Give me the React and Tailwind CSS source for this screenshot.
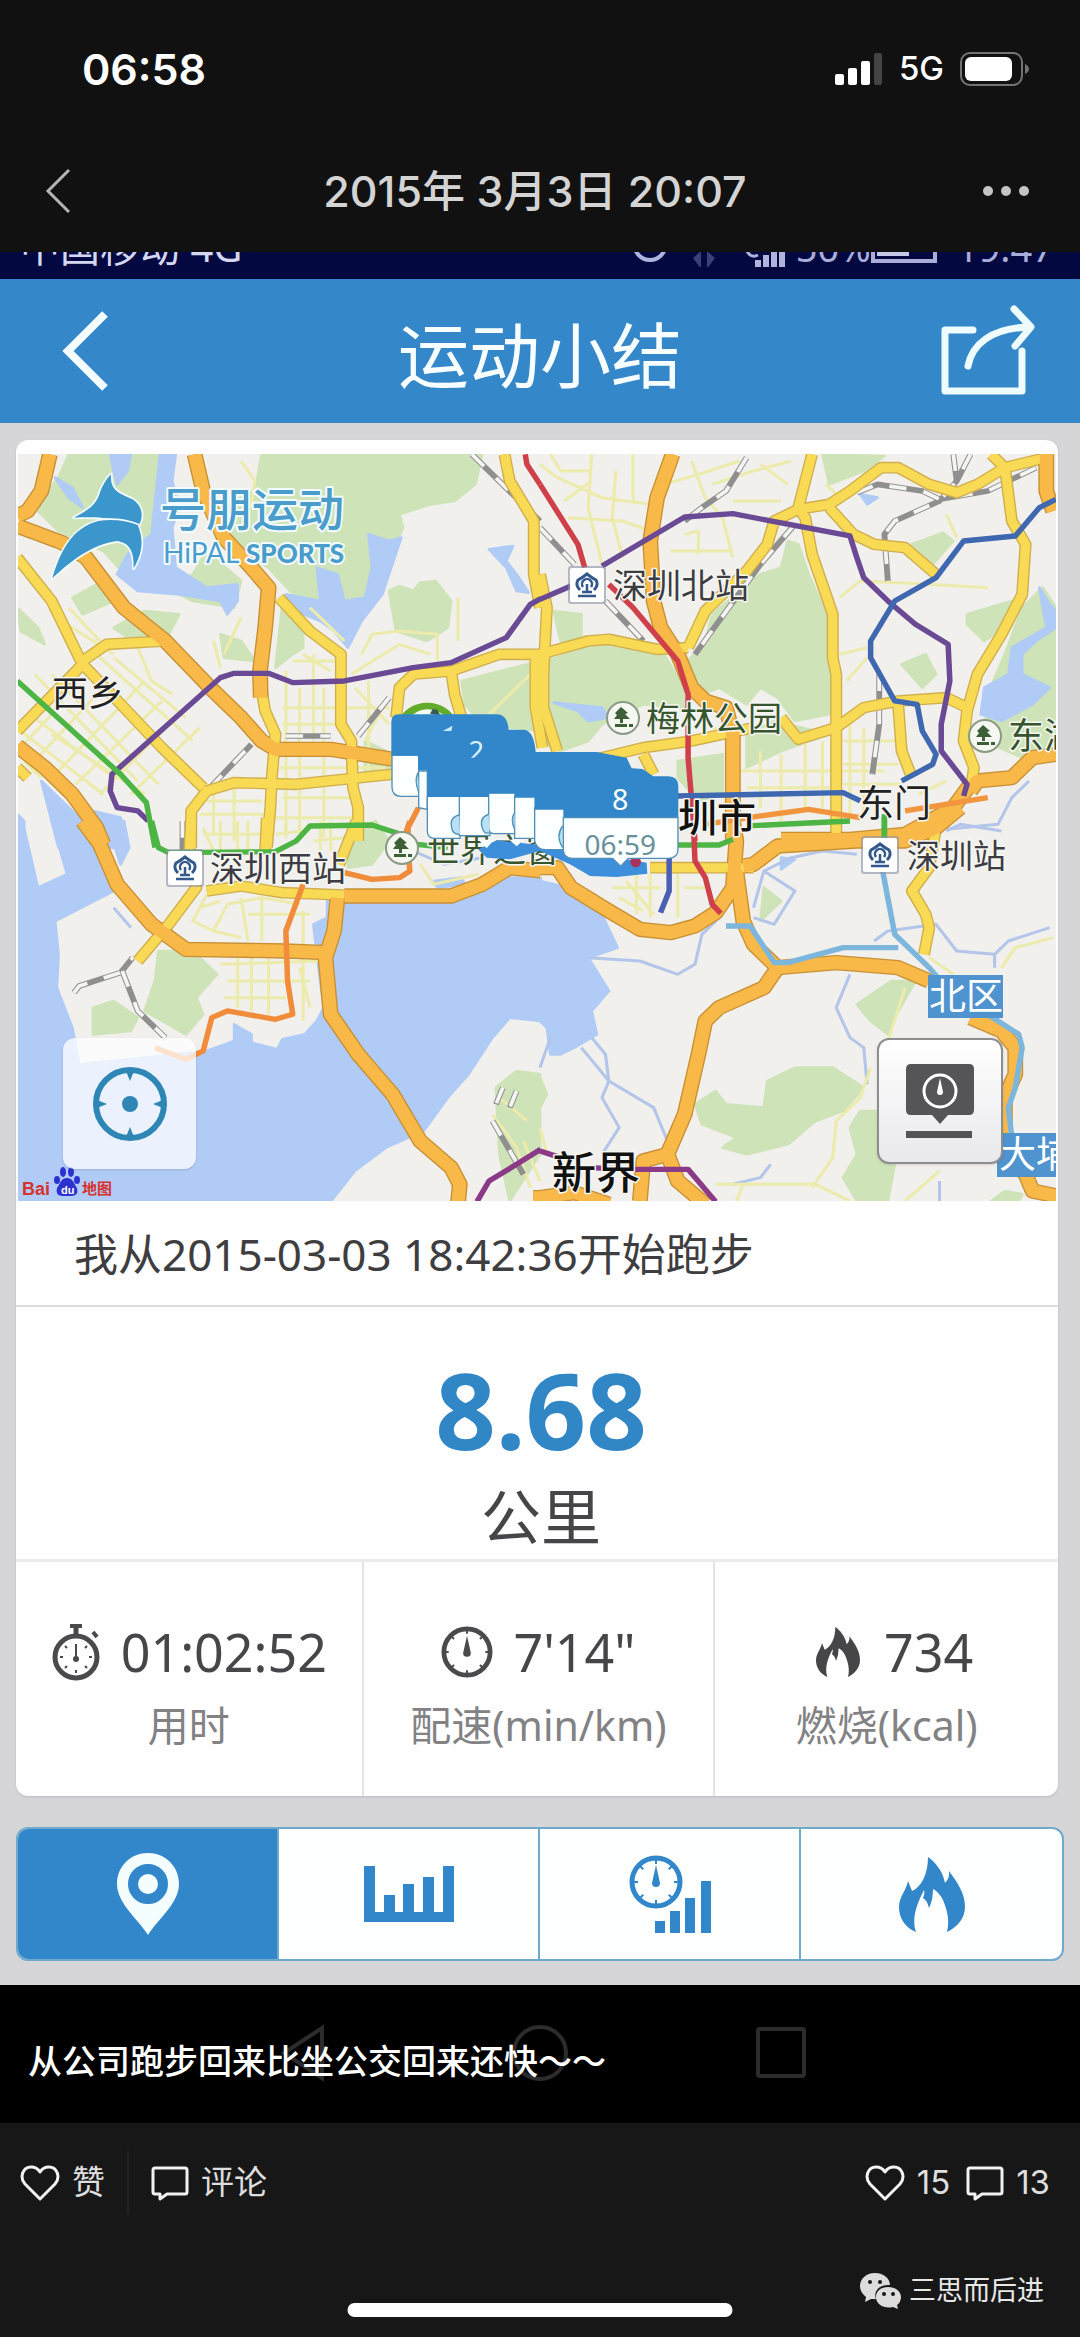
import React from "react";

/* The map is digitised in four sheets; each sheet has its own local grid. */
const SHEETS = {
  nw: "translate(0 440) scale(.3444 .3333)",
  ne: "translate(540 440) scale(.3444 .3333)",
  sw: "translate(0 820) scale(.3444 .3333)",
  se: "translate(540 820) scale(.3444 .3333)",
};

const GREEN = [
  ["nw", "M200 40L460 40 470 200 440 330 380 420 300 330 170 270 100 200 170 110Z"],
  ["nw", "M760 40L1400 40 1380 130 1320 180 1250 190 1160 220 1170 260 1140 330 1090 430 1040 540 980 560 940 470 860 470 780 380 700 330 640 200 740 150Z"],
  ["nw", "M1130 450L1160 435 1200 450 1220 425 1265 420 1310 480 1300 560 1240 600 1150 570Z"],
  ["nw", "M330 560L420 510 520 520 480 600 400 610Z"],
  ["nw", "M600 330L700 420 680 500 560 480 480 440 560 400Z"],
  ["nw", "M210 470L300 420 330 480 240 520Z"],
  ["nw", "M820 490L880 560 880 620 850 640 800 680Z"],
  ["nw", "M50 500L110 560 130 610 60 570Z"],
  ["nw", "M640 580L700 600 740 660 650 650Z"],
  ["nw", "M1340 720L1568 660 1568 870 1400 850 1350 790Z"],
  ["nw", "M1060 900L1140 940 1140 1000 1060 1000Z"],
  ["ne", "M0 665L170 610 360 640 430 760 420 800 300 790 180 850 140 900 60 930 0 900Z"],
  ["ne", "M500 520L640 400 700 380 720 300 750 310 780 400 840 540 840 820 740 840 690 770 640 740 600 790 520 740 470 760 430 660 480 600Z"],
  ["ne", "M820 40L1000 45 940 90 840 130Z"],
  ["ne", "M1080 310L1170 275 1200 300 1140 370Z"],
  ["ne", "M1240 520L1370 480 1350 560 1290 600 1240 550Z"],
  ["ne", "M1460 440L1498 500V900L1400 950 1290 900 1300 760 1350 640 1400 500Z"],
  ["ne", "M1050 670L1120 640 1150 700 1110 740Z"],
  ["ne", "M600 880L680 840 840 880 700 930 600 980Z"],
  ["ne", "M40 510L120 520 120 590 60 600Z"],
  ["ne", "M400 960L530 940 530 1060 460 1080 400 1010Z"],
  ["sw", "M460 390L560 390 630 460 570 530 590 580 540 640 420 570 450 480Z"],
  ["sw", "M270 560L330 540 400 590 380 630 270 640Z"],
  ["sw", "M1010 40L1090 0 1130 60 1080 130 1010 140Z"],
  ["sw", "M1440 800L1500 750 1568 760V1000L1480 1140 1450 1000Z"],
  ["se", "M450 850L510 810 540 850 650 860 660 780 740 740 850 740 940 800 880 870 800 900 720 970 600 1000 530 980 570 950 470 910Z"],
  ["se", "M920 550L1020 480 1090 480 1040 570 1010 640 960 600Z"],
  ["se", "M930 870H1000L1030 1030 1010 1140H920L880 1070 920 1000 900 920Z"],
  ["se", "M650 200L700 240 640 300Z"],
  ["se", "M0 770L20 820 0 860Z"],
  ["se", "M1310 1140L1350 1110 1400 1120 1390 1140Z"],
];

const WATER = [
  ["nw", "M320 40H380L370 90 340 130 330 90Z"],
  ["nw", "M465 40H510L500 120 520 200 500 260 510 380 600 440 690 430 690 480 660 520 640 480 520 460 400 450 340 400 370 340 440 280 450 180Z"],
  ["nw", "M160 110L210 140 240 200 200 170Z"],
  ["nw", "M830 460L930 480 920 380 980 400 1000 480 1060 470 1080 380 1070 280 1130 300 1165 290 1110 460 1050 540 1010 620 970 570 930 540 860 510Z"],
  ["nw", "M1420 325L1490 315 1470 360 1500 400 1535 455 1500 450 1470 380Z"],
  ["nw", "M120 1020L170 1070 240 1140 270 1220H170Z"],
  ["nw", "M50 1120L70 1140 70 1220H50Z"],
  ["nw", "M270 1110L350 1130 370 1220H310Z"],
  ["ne", "M1450 440L1480 490 1498 510V560L1440 600 1400 640 1400 700 1480 740 1430 790 1340 840 1280 820 1290 740 1360 700 1370 620 1470 560Z"],
  ["ne", "M40 785L180 800 200 830 140 840 110 810Z"],
  ["ne", "M930 160L980 170 950 190Z"],
  ["sw", "M50 0H65L110 200 195 160 150 0H240L330 210 160 300 170 400 165 500 210 620 230 730 600 690 680 660V610L730 640V665L805 685 820 655 885 640 920 600 940 560 920 400 910 310 950 290V240H1300L1450 170H1570V600L1480 590 1430 650 1360 760 1300 830 1230 930 1120 980 1030 1050 960 1142H50Z"],
  ["sw", "M310 0H360L375 80 350 130Z"],
  ["sw", "M1260 180L1340 170 1350 190 1270 200Z"],
  ["se", "M0 180L80 200 170 260 225 380 140 410 200 510 150 570 165 640 100 680 60 700 30 700 20 620 0 600Z"],
  ["se", "M700 110L740 115 700 145Z"],
];

const STREETS = [
  ["nw", "M100 700L400 1020M150 700L460 1030M60 870L300 1060M100 830L330 1010M150 880L420 1060M280 640L560 900M330 650L540 830M60 920L150 820M100 960L300 740M160 1000L420 720M220 1030L470 780M290 1060L520 820M380 1060L580 860M180 540L330 640M200 500L290 600M70 960L120 1010M400 620L440 720 500 760M620 600L640 680M700 530L650 640"],
  ["nw", "M830 690V1180M870 740V1180M910 640V900M940 740V1190M1070 720V1000M820 800H1130M820 850H1000M810 980H1120M820 1070H1020M800 1130H1030M880 640L960 690M850 660H990M1030 740L1130 850M1060 900L1120 780M600 1080H760M620 1180V1050M680 1040V1200M580 1120H780"],
  ["nw", "M1050 640L1080 580 1160 570 1270 580 1270 660M1020 700L1160 610 1250 640M700 60L740 120 730 200M1380 860L1540 700M1330 470V600M900 500L1000 600"],
  ["ne", "M30 40L60 90 150 90M0 70L50 110 180 170 320 190M150 40L140 200 180 370M220 90L210 230 240 350M70 180L150 120M270 40V180M80 230L240 240 320 270M360 130L460 100 580 60M440 60L480 170 530 230 560 350M380 330H560M420 280L460 270 460 340M560 180H700M500 130L620 90 730 60M640 70L720 130M860 160L830 130"],
  ["ne", "M580 990H1000M600 1040H840M640 930V1100M700 940V1140M770 900V1100M820 900V1100M900 850V1120M940 860V1120M880 900H1030M880 970H1040M880 1030H1050M460 830L560 900M870 470L930 420 1130 430 1300 440M870 640L950 620M890 720L950 650M1180 220L1210 290M1100 1060L1180 1020"],
  ["sw", "M590 20L620 90M640 0V90M690 0V90M720 0V90M830 0V50M590 40H760M800 40L880 30M600 220L560 300 620 330 660 250 760 230 870 250M700 230L720 360M760 230V360M620 330L700 350M640 430L930 420M660 480H900M650 530H830M690 400V560M730 400V570M780 400V580M880 270V600M870 440L900 560M720 280H900M580 260L640 240M910 60L1000 50M930 0V90M960 0V90M1220 130L1260 190 1390 160M1430 880L1500 980 1540 1100M1450 830L1530 900M1520 960L1568 1080"],
  ["se", "M210 200H350M230 230L300 270M280 150V280M320 160V290M400 150V290M420 200H480M250 180L330 280M510 1090H640L800 1090 900 1140M790 1100L850 1010 860 900 930 830 960 740M570 1140L590 1090M1060 500L1010 660M1340 440L1380 380 1490 350M1130 410L1200 460M1060 1140L1160 1050M0 920L20 1000M680 110L740 60"],
];

const RAILS = [
  ["nw", "M1370 40L1568 240"],
  ["nw", "M610 1040L730 910M830 885H960M1040 885L1130 770"],
  ["ne", "M600 50L540 150 470 200 420 240M740 250L640 370 520 540 450 640"],
  ["ne", "M1200 40L1210 120M1250 40L1210 120 1160 180 1030 240 1000 280 1010 420M920 155L980 130 1110 150 1160 175 1300 150 1440 80"],
  ["ne", "M985 700V850L965 1000"],
  ["ne", "M0 260L100 370M190 480L300 600"],
  ["sw", "M215 515L230 495 350 455 385 410M355 450L400 570 480 650"],
  ["sw", "M530 0V90M1460 800L1440 850M1500 810L1480 860M1430 900L1520 1060"],
];

const RIVERS = [
  ["se", "M140 410L290 420 400 460 450 430 470 340 520 290M150 650L190 700 200 780 330 860 370 960M120 680L200 780 180 830 230 920 180 1000M900 460L860 560 900 650 940 680 950 790M620 260L650 150 740 210 680 310 620 290M650 150L730 110 820 90 920 100M970 360L1010 330 1150 310 1210 390 1320 400 1360 360 1480 320M1320 400V440M0 740L30 650M560 1090L640 1070 670 1030M1180 30L1220 10 1340 30M1160 1140V1080"],
  ["ne", "M1180 1165L1330 1150 1370 1070 1420 1020"],
  ["sw", "M330 260L380 320M1200 90L1290 130 1400 110"],
];

const YELLOW = [
  ["nw", "M755 720L770 810 800 880 790 1000 785 1100 775 1220"],
  ["nw", "M50 350L150 480 230 650 240 670 50 870"],
  ["nw", "M240 660L310 610 480 600M240 670L360 800 470 920 590 1040"],
  ["nw", "M1140 1000L1000 1015 860 1030 680 1025 600 1050 555 1110V1220"],
  ["nw", "M810 470L900 570 990 640V850L1020 900 1025 1040 1040 1100V1200"],
  ["nw", "M1150 830L1160 740 1200 700 1310 690 1450 640 1570 640M1310 690L1320 760 1340 830"],
  ["nw", "M1465 40L1480 120 1550 240V400L1568 500M1555 640V800L1575 920"],
  ["nw", "M50 980L80 1010"],
  ["ne", "M790 40L750 200 770 230 790 340 850 520V650L860 700V1200"],
  ["ne", "M430 620L480 510 600 390 660 310 680 240 750 205 840 190 900 150 990 80H1040L1130 130 1210 155 1270 130 1350 80 1470 50"],
  ["ne", "M1310 40L1350 80 1370 240 1410 310 1400 460 1340 580 1270 700 1240 810 1230 900 1260 980 1250 1050"],
  ["ne", "M840 200L910 280 970 310 1060 320 1150 400"],
  ["ne", "M0 640L140 600 200 595 340 625 430 620"],
  ["ne", "M700 830L750 895 860 860 940 800 1040 780 1180 770 1240 800M1040 790L1050 930 1080 1010"],
  ["ne", "M0 400L20 500 10 700V800L50 930M160 955L300 920 440 900 620 860M300 940L330 1000"],
  ["sw", "M555 -10L550 90 570 200 490 310 400 420M600 210L700 195 820 215 1000 222M1035 0L985 130"],
  ["sw", "M775 -10L770 90"],
  ["se", "M320 140H620M1150 20L1130 140 1080 210 1120 280 1130 320 1115 400"],
];

const ORANGE = [
  ["nw", "M145 40L120 150 80 210 50 225M50 255L180 305 250 350 360 500 480 600 620 750 700 830 760 900 800 925 960 925 1140 955"],
  ["nw", "M565 40L590 150 650 290 730 380 780 440 770 560 755 690 757 770"],
  ["nw", "M50 915L130 980 210 1060 280 1160 300 1210"],
  ["ne", "M385 40L340 170 320 300 330 480 350 560 400 640 440 740 480 780 540 800 560 880V1200"],
  ["ne", "M1470 40V150L1490 210M1250 1050L1270 1020 1370 1010 1430 950 1498 940M700 1195H900L1060 1180 1200 1100 1250 1030"],
  ["sw", "M240 0L290 70 340 190 440 310 540 385 830 390 950 395M1000 225H1310L1400 190 1480 140 1570 150"],
  ["sw", "M980 230L970 330 945 410 960 580 1040 700 1140 820 1220 960 1310 1040 1335 1090 1330 1145"],
  ["se", "M0 140H50L90 200 200 270 290 325 380 335 450 315 510 275 560 200 570 60 560 0"],
  ["se", "M590 135L620 130 690 75 920 60H1060L1150 20 1220 -40"],
  ["se", "M570 150L590 300 620 370 690 440 860 425 1040 440 1130 480M690 440L650 500 520 560 480 600 460 700 420 880 370 1000 300 1020 290 1140M370 1000L400 1080 480 1150"],
  ["se", "M1250 590L1340 630 1380 680V760L1350 830V1000L1410 1060 1430 1110 1500 1125M0 1130L100 1115 200 1150M-20 1130L0 1130"],
];

const METRO = [
  ["nw", "#6a4a94", "M430 1140L400 1110 340 1100 320 1050 325 1000 640 710 680 697H780L850 725 1000 720 1200 680 1310 665 1470 590 1540 490 1570 473"],
  ["ne", "#6a4a94", "M0 475L90 435M180 375L420 228 560 218 900 285 920 350 940 410 1010 480 1090 550 1185 610 1190 720 1165 850V930L1240 1030 1230 1065"],
  ["nw", "#4cb544", "M50 720L350 1000 425 1085 450 1220"],
  ["sw", "#4cb544", "M440 0L460 80 490 95 800 92 860 60 900 15 1080 12 1150 35 1210 70 1300 80"],
  ["se", "#4cb544", "M400 72H520L560 55M1000 -20V50"],
  ["ne", "#4cb544", "M600 1155L900 1140M1000 1130V1200"],
  ["nw", "#d0404a", "M1525 40L1530 70 1568 130"],
  ["ne", "#d0404a", "M0 130L110 310 130 380M200 430L270 500 400 660 430 760V950L450 1200"],
  ["se", "#d0404a", "M445 0L450 120 480 170 500 250 525 277"],
  ["ne", "#3f68b0", "M1498 175L1450 200 1380 285 1230 300 1150 410 1030 480 960 600V650L1030 780 1095 790 1110 870 1150 940 1140 970 1050 1020M400 1065L880 1055 930 1080"],
  ["se", "#4a5fb4", "M375 110V210L350 275"],
  ["se", "#7db6dc", "M540 315H610L680 425H720L880 380H1040M995 150L1030 340 1130 440 1180 500 1330 600 1390 640 1400 680 1380 800 1360 860 1370 950"],
  ["nw", "#f08c3a", "M1215 1100L1185 1160V1200"],
  ["sw", "#f08c3a", "M1190 0L1180 30 1190 150 1160 170 1080 175 1000 155M880 190L830 330 835 480 850 580 800 595 660 570 615 590 590 690 540 715 450 680"],
  ["ne", "#f2953f", "M480 1150L640 1125 780 1105 930 1130M1060 1110L1300 1070"],
  ["sw", "#8a3a86", "M1385 1142L1420 1080 1500 1030 1570 985"],
  ["se", "#8a3a86", "M0 990L60 1010M140 1040L280 1045H430L510 1142"],
];

function Lines({ data, color, width, dash }) {
  return data.map(([sheet, d], i) => (
    <path key={i} transform={SHEETS[sheet]} d={d} fill="none" stroke={color} strokeWidth={width} strokeDasharray={dash} strokeLinejoin="round" />
  ));
}

function Areas({ data, color }) {
  return data.map(([sheet, d], i) => <path key={i} transform={SHEETS[sheet]} d={d} fill={color} stroke={color} strokeWidth="8" strokeLinejoin="round" />);
}

function Station({ x, y }) {
  return (
    <g transform={`translate(${x} ${y})`}>
      <rect x="-19" y="-19" width="38" height="38" rx="3" fill="#8c93a6" opacity=".6" />
      <rect x="-17" y="-17" width="34" height="34" rx="2" fill="#fff" />
      <g fill="none" stroke="#33598c" strokeWidth="3">
        <path d="M-7 5Q-12 0-9-5Q-5-7 0-11Q5-7 9-5Q12 0 7 5" />
        <path d="M-4 2A5 5 0 1 1 4 2M0-1V8" strokeWidth="2.5" />
        <path d="M-9 11H9M-5 7H5" strokeWidth="2.5" />
      </g>
    </g>
  );
}

function Park({ x, y }) {
  return (
    <g transform={`translate(${x} ${y})`}>
      <circle r="16" fill="#f5f8f0" stroke="#8b9a86" strokeWidth="2" />
      <path d="M-2-11L5-5 2-4 7 1H0V5H-3V1H-9L-6-3-8-5Z" fill="#3d5f38" />
      <path d="M-8 6H4V9H-8ZM6 6H10V9H6Z" fill="#3d5f38" />
    </g>
  );
}

function Label({ x, y, size = 34, weight = 400, color = "#3c3c42", children }) {
  return (
    <text x={x} y={y} fontSize={size} fontWeight={weight} fill={color} stroke="#f6f6f2" strokeWidth="3" strokeLinejoin="round" style={{ paintOrder: "stroke" }}>
      {children}
    </text>
  );
}

function Markers() {
  const blue = "#3187c9";
  const edge = { fill: "#fbffff", stroke: "#4f8fb8", strokeWidth: 4 };
  return (
    <g transform="translate(370 680) scale(.3333)">
      <path d="M82 125A95 88 0 0 1 262 125Z" fill="#62ab2b" />
      <path d="M118 110Q170 60 232 110Z" fill="#f4fbf0" />
      <path d="M180 98L188 84 202 86 212 104Z" fill="#3b5a52" />
      <path d="M325 505L380 478 580 500 830 545 832 578 740 588 660 585 600 550 510 510 420 535 350 530Z" fill="#3d8edb" />
      <circle cx="797" cy="543" r="16" fill="#a9335c" />
      <path d="M66 222V318Q66 346 94 346H160V222Z" {...edge} />
      <path d="M146 270V380L172 385V270Z" {...edge} />
      <path d="M172 345V450Q172 472 194 472H270V345Z" {...edge} />
      <path d="M268 345V464H360V345Z" {...edge} />
      <path d="M356 335V440Q356 458 374 458H436V335Z" {...edge} />
      <path d="M434 345V472H496V345Z" {...edge} />
      <path d="M494 380V480Q500 506 526 506H590V380Z" {...edge} />
      <g fill="#b9e0f4" stroke="#4f8fb8" strokeWidth="4">
        <path d="M144 275Q132 300 146 332" />
        <path d="M268 402Q238 408 245 440Q248 462 270 460" />
        <path d="M356 400Q328 408 336 438Q340 460 358 456" />
        <path d="M434 395Q420 415 434 445" />
        <path d="M578 435Q556 465 578 500" />
      </g>
      <path d="M325 476H372L350 502ZM418 476H462L440 496Z" fill="#f7ffff" />
      <path d="M64 224V122Q64 100 86 100H380Q412 100 416 146H460Q492 146 497 213H680L770 230 785 262 818 264 850 286H895Q925 286 925 316V410H580V386H494V350H434V338H356V348H172V268H144V224Z" fill={blue} />
      <path d="M218 150L248 134 244 150Z" fill="#c9ecff" />
      <clipPath id="two">
        <path d="M280 170H360V230H280Z" />
      </clipPath>
      <text x="319" y="240" fontSize="82" textAnchor="middle" fill="#d8f2ff" clipPath="url(#two)">2</text>
      <path d="M580 410H924V505Q924 532 896 532H775L752 556 728 532H606Q580 532 580 505Z" {...edge} />
      <text x="751" y="386" fontSize="86" textAnchor="middle" fill="#fff">8</text>
      <text x="751" y="522" fontSize="84" textAnchor="middle" fill="#6c8f9c">06:59</text>
    </g>
  );
}

function BrandMark() {
  return (
    <g>
      <g transform={SHEETS.nw} fill="#3b97cb" stroke="#f2fbff" strokeWidth="10" strokeLinejoin="round" style={{ paintOrder: "stroke" }}>
        <path d="M322 100C320 150 345 155 385 175C420 200 415 235 400 258C370 235 290 225 215 230C260 205 280 190 290 155Q300 125 322 100Z" />
        <path d="M152 412C175 330 210 260 285 240Q345 230 400 252C415 290 418 330 388 382C390 330 375 305 340 300C270 310 210 355 152 412Z" />
      </g>
      <g fill="#4a9ccb" stroke="#f2fbff" strokeWidth="4" strokeLinejoin="round" style={{ paintOrder: "stroke" }}>
        <text x="160" y="525" fontSize="46" fontWeight="500">号朋运动</text>
        <text x="163" y="562" fontSize="28" fontFamily="Lato" fontWeight="400">HiPAL</text>
        <text x="246" y="562" fontSize="26" fontFamily="Lato" fontWeight="900">SPORTS</text>
      </g>
    </g>
  );
}

function RouteMap() {
  return (
    <svg viewBox="18 453 1038 747" className="block h-auto w-full bg-[#f1f0ed]" role="img" aria-label="跑步路线地图" fontFamily="'Noto Sans', 'Noto Sans CJK SC', sans-serif">
      <Areas data={GREEN} color="#cfe3b9" />
      <Areas data={WATER} color="#afcbf6" />
      <Lines data={RIVERS} color="#b3c6ea" width="9" />
      <Lines data={STREETS} color="#ecebac" width="9" />
      <Lines data={RAILS} color="#8f8f8f" width="17" />
      <Lines data={RAILS} color="#f4f4f2" width="11" dash="50 50" />
      <Lines data={YELLOW} color="#cfae4c" width="35" />
      <Lines data={ORANGE} color="#c79034" width="46" />
      <Lines data={YELLOW} color="#f9da55" width="27" />
      <Lines data={ORANGE} color="#f8b949" width="38" />
      {METRO.map(([sheet, color, d], i) => (
        <path key={i} transform={SHEETS[sheet]} d={d} fill="none" stroke={color} strokeWidth="16" strokeLinejoin="round" />
      ))}
      <Label x={52} y={706} size={36} color="#222">西乡</Label>
      <Label x={613} y={597}>深圳北站</Label>
      <Label x={646} y={730} color="#36552f">梅林公园</Label>
      <Label x={1008} y={748} size={36} color="#36552f">东湖</Label>
      <Label x={678} y={831} size={39} weight={500} color="#111">圳市</Label>
      <Label x={857} y={816} size={37} color="#222">东门</Label>
      <Label x={907} y={867} size={33}>深圳站</Label>
      <Label x={210} y={880}>深圳西站</Label>
      <Label x={427} y={861} size={33} color="#36552f">世界之窗</Label>
      <Label x={552} y={1188} size={44} weight={500} color="#111">新界</Label>
      <Station x={587} y={584} />
      <Station x={185} y={867} />
      <Station x={880} y={854} />
      <Park x={623} y={717} />
      <Park x={985} y={735} />
      <Park x={402} y={847} />
      <rect x="928" y="974" width="75" height="43" fill="#4f93cf" />
      <text x="929" y="1009" fontSize="37" fill="#fff">北区</text>
      <rect x="997" y="1132" width="75" height="44" fill="#4f93cf" />
      <text x="999" y="1167" fontSize="37" fill="#fff">大埔</text>
      <Markers />
      <BrandMark />
      <g fontWeight="700">
        <text x="22" y="1194" fontSize="18" fontFamily="Liberation Sans" fill="#d8322f">Bai</text>
        <g fill="#2b32d0">
          <ellipse cx="57" cy="1179" rx="3" ry="4" />
          <ellipse cx="63" cy="1171" rx="3" ry="5" />
          <ellipse cx="71" cy="1171" rx="3" ry="5" />
          <ellipse cx="77" cy="1179" rx="3" ry="4" />
          <path d="M67 1177C73 1177 74 1183 77 1187Q79 1195 71 1195H62Q55 1194 57 1187C60 1183 61 1177 67 1177Z" />
        </g>
        <text x="61" y="1193" fontSize="11" fontFamily="Liberation Sans" fill="#fff">du</text>
        <text x="82" y="1193" fontSize="15" fill="#d8322f">地图</text>
      </g>
    </svg>
  );
}

function Gauge({ className, color, ticks = "5" }) {
  const marks = [0, 45, 90, 135, 180, 225, 270, 315];
  return (
    <svg viewBox="0 0 54 54" className={className} aria-hidden="true">
      <circle cx="27" cy="27" r="24" fill="none" stroke={color} strokeWidth="5" />
      {marks.map((a) => (
        <path key={a} d={`M27 5V${5 + Number(ticks)}`} stroke={color} strokeWidth="2" transform={`rotate(${a} 27 27)`} />
      ))}
      <path d="M27 10L31 28A4 4 0 1 1 23 28Z" fill={color} />
    </svg>
  );
}

function Flame({ className }) {
  return (
    <svg viewBox="0 0 66 75" className={className} fill="currentColor" aria-hidden="true">
      <path d="M29 0C36 5 44 14 46 26Q51 21 50 14C58 25 66 36 66 50C66 62 57 71 48 75C51 63 48 53 44 43Q40 35 34 32Q34 43 30 51Q28 43 24 41Q26 36 25 33C19 45 12 60 17 75C5 70 0 60 0 50C0 40 7 34 9 24L13 34C22 30 29 18 29 0Z" />
    </svg>
  );
}

function Stopwatch() {
  return (
    <svg viewBox="0 0 50 58" className="h-[58px] w-[50px]" fill="none" stroke="#4a4a4c" aria-hidden="true">
      <circle cx="25" cy="34" r="21" strokeWidth="5" />
      <path d="M25 2V13" strokeWidth="5" />
      <path d="M19 3H31M42 9L46 14" strokeWidth="4" />
      <path d="M25 21V36M25 50V47M9 34H12M41 34H38M14 23L16 25M36 23L34 25M14 45L16 43M36 45L34 43" strokeWidth="2" />
      <circle cx="25" cy="36" r="3" fill="#4a4a4c" stroke="none" />
    </svg>
  );
}

function Heart() {
  return (
    <svg viewBox="0 0 40 36" className="h-9 w-10" fill="none" stroke="#f2f2f2" strokeWidth="3" strokeLinejoin="round" aria-hidden="true">
      <path d="M20 34L5 19C-1 12 3 2 11 2Q17 2 20 7Q23 2 29 2C37 2 41 12 35 19Z" />
    </svg>
  );
}

function Comment() {
  return (
    <svg viewBox="0 0 38 35" className="h-[35px] w-[38px]" fill="none" stroke="#f2f2f2" strokeWidth="3" strokeLinejoin="round" aria-hidden="true">
      <path d="M4 2H34Q36 2 36 4V26Q36 28 34 28H16L9 33V28H4Q2 28 2 26V4Q2 2 4 2Z" />
    </svg>
  );
}

function Stat({ icon, value, label }) {
  return (
    <div className="flex flex-col items-center pt-[54px]">
      <div className="flex h-[72px] items-center gap-5">
        {icon}
        <span className="text-[52px] leading-[72px]">{value}</span>
      </div>
      <div className="pt-1 text-[41px] leading-[66px] text-[#828284]">{label}</div>
    </div>
  );
}

export default function App() {
  return (
    <main className="w-full overflow-hidden bg-[#171717] font-['Noto_Sans','Noto_Sans_CJK_SC',sans-serif] text-[#464648]">
      <header className="bg-[#111112] font-['Inter','Noto_Sans_CJK_SC',sans-serif]">
        <div className="flex h-[138px] items-center justify-between pr-[50px] pl-[82px] text-white">
          <span className="text-[43px] font-semibold">06:58</span>
          <div className="flex items-center gap-4">
            <svg viewBox="0 0 48 32" className="h-8 w-12" fill="#fff" aria-hidden="true">
              <rect y="21" width="9" height="11" rx="2" />
              <rect x="13" y="15" width="9" height="17" rx="2" />
              <rect x="26" y="8" width="9" height="24" rx="2" />
              <rect x="39" width="8" height="32" rx="2" fill="#444446" />
            </svg>
            <span className="text-[33px] font-medium">5G</span>
            <svg viewBox="0 0 70 34" className="h-[34px] w-[70px]" aria-hidden="true">
              <rect x="1" y="1" width="61" height="32" rx="9" fill="none" stroke="#737375" strokeWidth="2" />
              <rect x="5" y="5" width="47" height="24" rx="6" fill="#fff" />
              <path d="M65 12Q69 14 69 17Q69 20 65 22Z" fill="#737375" />
            </svg>
          </div>
        </div>
        <div className="flex h-[114px] items-center justify-between pr-[50px] pb-2 pl-[44px]">
          <button aria-label="返回">
            <svg viewBox="0 0 28 46" className="h-[46px] w-7" fill="none" stroke="#b5b5b5" strokeWidth="3" aria-hidden="true">
              <path d="M25 2L4 23 25 44" />
            </svg>
          </button>
          <h1 className="pl-4 text-[43px] font-medium text-[#d4d4d4]">2015年 3月3日 20:07</h1>
          <button aria-label="更多">
            <svg viewBox="0 0 48 12" className="h-3 w-12" fill="#c4c4c4" aria-hidden="true">
              <circle cx="6" cy="6" r="5" />
              <circle cx="24" cy="6" r="5" />
              <circle cx="42" cy="6" r="5" />
            </svg>
          </button>
        </div>
      </header>

      <section>
        <div className="flex h-[27px] items-end justify-between overflow-hidden bg-[#030840] pr-[26px] pb-3 pl-5 text-[40px] leading-10 text-[#d5d7f0]">
          <span>中国移动 4G</span>
          <div className="flex items-end text-[#a9aed8]">
            <svg viewBox="0 0 160 40" className="mr-1 h-10 w-40" fill="none" stroke="#b0b4dc" strokeWidth="4" aria-hidden="true">
              <path d="M2 4V16A16 17 0 0 0 34 16V4" />
              <path d="M61 31L69 24V42ZM83 31L75 24V42Z" fill="#3a3f78" stroke="none" />
              <path d="M114 22Q118 32 126 28" strokeWidth="3" />
              <path d="M126 40V33M134 40V28M142 40V20M150 40V10" strokeWidth="6" />
            </svg>
            <span className="text-[38px]">50%</span>
            <svg viewBox="0 0 66 40" className="mr-5 h-10 w-[66px]" aria-hidden="true">
              <path d="M2 12H64V34H2Z" fill="none" stroke="#a9aed8" strokeWidth="4" />
              <path d="M6 16H38V29H6Z" fill="#c5c8e6" />
            </svg>
            <span className="text-[38px]">19:47</span>
          </div>
        </div>

        <div className="flex h-36 items-center justify-between bg-[#3488c9] pr-11 pl-[62px]">
          <button aria-label="返回">
            <svg viewBox="0 0 48 80" className="h-20 w-12" fill="none" stroke="#f4fdff" strokeWidth="8" aria-hidden="true">
              <path d="M43 3L6 40 43 77" />
            </svg>
          </button>
          <h2 className="pt-2 pl-[30px] text-[71px] leading-[100px] text-[#f8feff]">运动小结</h2>
          <button aria-label="分享">
            <svg viewBox="0 0 96 92" className="h-[92px] w-24" fill="none" stroke="#eefbff" strokeWidth="7" strokeLinejoin="round" strokeLinecap="round" aria-hidden="true">
              <path d="M33 25H5V86H82V46" />
              <path d="M28 61C32 40 50 23 90 22M74 4L91 22 75 41" />
            </svg>
          </button>
        </div>

        <div className="bg-[#d6d5d7] px-4 pt-[17px] pb-6">
          <article className="mr-[6px] overflow-hidden rounded-xl bg-[#fefefe] pt-[14px] shadow-sm">
            <div className="relative mx-[2px]">
              <RouteMap />
              <button aria-label="定位" className="absolute bottom-8 left-[45px] flex h-[131px] w-[133px] items-center justify-center rounded-xl bg-white/75 shadow">
                <svg viewBox="0 0 74 74" className="h-[74px] w-[74px]" fill="#2d86b4" aria-hidden="true">
                  <circle cx="37" cy="37" r="34" fill="none" stroke="#2d86b4" strokeWidth="6" />
                  <circle cx="37" cy="37" r="8" />
                  <path d="M33 4H41L37 14ZM33 70H41L37 60ZM4 33V41L14 37ZM70 33V41L60 37Z" />
                </svg>
              </button>
              <button aria-label="配速标记" className="absolute right-[53px] bottom-[37px] flex h-[126px] w-[126px] items-center justify-center rounded-xl border-2 border-[#8e8e8e] bg-linear-to-b from-white to-[#e9e9ec] shadow">
                <svg viewBox="0 0 68 74" className="h-[74px] w-[68px]" fill="#555558" aria-hidden="true">
                  <path d="M5 0H63Q68 0 68 5V46Q68 51 63 51H42L34 60 26 51H5Q0 51 0 46V5Q0 0 5 0ZM0 67H66V74H0Z" />
                  <circle cx="34" cy="27" r="16" fill="none" stroke="#fff" strokeWidth="3" />
                  <path d="M34 14L37 28A3 3 0 1 1 31 28Z" fill="#fff" />
                </svg>
              </button>
            </div>
            <p className="border-b-2 border-[#dddddd] pt-5 pb-[18px] pl-[58px] text-[44px] leading-[66px] text-[#3e3e40]">我从2015-03-03 18:42:36开始跑步</p>
            <div className="flex flex-col items-center border-b-[3px] border-[#ebebeb] pt-10 pl-2">
              <strong className="text-[106px] leading-[124px] font-bold text-[#3187c5]">8.68</strong>
              <span className="pt-1 text-[60px] leading-[84px]">公里</span>
            </div>
            <div className="grid h-[234px] grid-cols-[347fr_351fr_342fr] divide-x-2 divide-[#e3e3e3]">
              <Stat icon={<Stopwatch />} value="01:02:52" label="用时" />
              <Stat icon={<Gauge className="h-[52px] w-[52px]" color="#4a4a4c" ticks="3" />} value={"7'14\""} label="配速(min/km)" />
              <Stat icon={<Flame className="mr-1 ml-4 h-[50px] w-[44px]" />} value="734" label="燃烧(kcal)" />
            </div>
          </article>

          <nav className="mt-[31px] grid h-[134px] grid-cols-4 divide-x-2 divide-[#6fa9cb] overflow-hidden rounded-xl border-2 border-[#6fa9cb] bg-[#fdfefe] text-[#3187c9]">
            <button aria-label="路线" className="flex items-center justify-center bg-[#3187c9]">
              <svg viewBox="0 0 62 82" className="h-[82px] w-[62px]" aria-hidden="true">
                <path d="M31 0C48 0 62 13 62 31C62 50 42 65 31 82C20 65 0 50 0 31C0 13 14 0 31 0Z" fill="#f4fdff" />
                <circle cx="31" cy="31" r="15" fill="#f4fdff" stroke="#3187c9" strokeWidth="10" />
              </svg>
            </button>
            <button aria-label="图表" className="flex items-center justify-center">
              <svg viewBox="0 0 90 56" className="h-14 w-[90px]" fill="currentColor" aria-hidden="true">
                <path d="M0 0H11V46H20V29H31V46H39V18H50V46H59V11H70V46H79V0H90V56H0Z" />
              </svg>
            </button>
            <button aria-label="配速" className="flex items-center justify-center">
              <span className="relative block h-[78px] w-[82px]">
                <Gauge className="h-[54px] w-[54px]" color="#3187c9" ticks="4" />
                <svg viewBox="0 0 56 52" className="absolute right-0 bottom-0 h-[52px] w-14" fill="currentColor" aria-hidden="true">
                  <path d="M0 40H10V52H0ZM15 30H25V52H15ZM30 17H40V52H30ZM46 0H56V52H46Z" />
                </svg>
              </span>
            </button>
            <button aria-label="热量" className="flex items-center justify-center">
              <Flame className="h-[75px] w-[66px]" />
            </button>
          </nav>
        </div>
      </section>

      <section className="relative flex h-[138px] items-center bg-black">
        <svg viewBox="0 0 526 60" className="absolute left-[280px] h-[60px] w-[526px]" fill="none" stroke="#2c2c2c" strokeWidth="4" aria-hidden="true">
          <path d="M42 4V54L4 29Z" />
          <circle cx="260" cy="29" r="26" />
          <rect x="478" y="5" width="46" height="47" rx="2" />
        </svg>
        <p className="relative pt-3 pl-7 font-['Noto_Sans_CJK_SC',sans-serif] text-[34px] leading-[50px] font-medium text-white">从公司跑步回来比坐公交回来还快～～</p>
      </section>

      <footer className="font-['Inter','Noto_Sans_CJK_SC',sans-serif] text-[33px] text-[#dedede]">
        <div className="flex h-[124px] items-center justify-between pr-[30px] pb-1 pl-5">
          <div className="flex items-center">
            <button className="flex items-center gap-3">
              <Heart />
              赞
            </button>
            <span className="mx-[22px] h-16 w-[2px] bg-[#222222]" />
            <button className="flex items-center gap-3">
              <Comment />
              评论
            </button>
          </div>
          <div className="flex items-center gap-3">
            <Heart />
            <span className="mr-1">15</span>
            <Comment />
            <span>13</span>
          </div>
        </div>
        <div className="relative flex h-[92px] justify-end pt-5 pr-9">
          <span className="absolute bottom-[22px] left-1/2 h-[14px] w-[385px] -translate-x-1/2 rounded-full bg-white" />
          <div className="flex h-[48px] items-center gap-2 text-[27px] text-[#e8e8e8]">
            <svg viewBox="0 0 41 36" className="h-9 w-[41px]" fill="#dcdcdc" aria-hidden="true">
              <path d="M15 0C24 0 30 6 30 12C20 11 13 18 16 26L11 26 5 29 6 24C2 21 0 17 0 13C0 6 6 0 15 0Z" />
              <path d="M28 14C35 14 41 18 41 24Q41 29 37 32L38 36 33 34C25 36 16 32 16 24C16 18 21 14 28 14Z" />
              <g fill="#171717">
                <circle cx="10" cy="9" r="2" />
                <circle cx="20" cy="9" r="2" />
                <circle cx="24" cy="21" r="2" />
                <circle cx="33" cy="21" r="2" />
              </g>
            </svg>
            三思而后进
          </div>
        </div>
      </footer>
    </main>
  );
}
